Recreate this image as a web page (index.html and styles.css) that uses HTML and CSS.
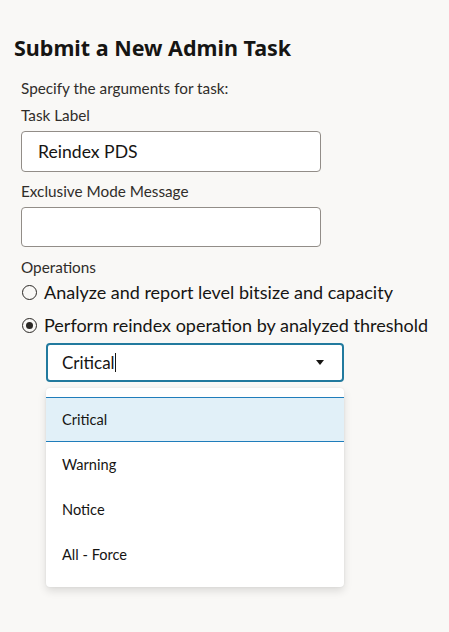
FILE: index.html
```html
<!DOCTYPE html>
<html lang="en">
<head>
<meta charset="utf-8">
<title>Submit a New Admin Task</title>
<link rel="stylesheet" href="styles.css">
</head>
<body>
<div class="page">
  <h1 class="title">Submit a New Admin Task</h1>
  <div class="form">
    <p class="intro">Specify the arguments for task:</p>
    <label class="label">Task Label</label>
    <div class="input">Reindex PDS</div>
    <label class="label label-gap">Exclusive Mode Message</label>
    <div class="input input-empty"></div>
    <div class="label label-gap2">Operations</div>
    <div class="radio-row">
      <span class="radio"></span>
      <span class="radio-text">Analyze and report level bitsize and capacity</span>
    </div>
    <div class="radio-row radio-row2">
      <span class="radio radio-on"><span class="dot"></span></span>
      <span class="radio-text">Perform reindex operation by analyzed threshold</span>
    </div>
    <div class="select-wrap">
      <div class="select">
        <span class="select-value">Critical<span class="cursor"></span></span>
        <span class="caret"></span>
      </div>
      <ul class="menu">
        <li class="item item-active">Critical</li>
        <li class="item">Warning</li>
        <li class="item">Notice</li>
        <li class="item">All - Force</li>
      </ul>
    </div>
  </div>
</div>
</body>
</html>
```
FILE: styles.css
```css
html, body {
  margin: 0;
  padding: 0;
  background: #f9f8f6;
}
body {
  font-family: "Lato", "Noto Sans", sans-serif;
  color: #161513;
  width: 449px;
  height: 632px;
  overflow: hidden;
}
.page {
  padding: 35px 14px 0 14px;
}
.title {
  margin: 0;
  font-family: "Noto Sans", "Lato", sans-serif;
  font-size: 21.5px;
  line-height: 26px;
  font-weight: 700;
  color: #161513;
  white-space: nowrap;
}
.form {
  padding-left: 7px;
}
.intro {
  margin: 17px 0 0 0;
  font-size: 15.3px;
  line-height: 20px;
  color: #302d2a;
}
.label {
  display: block;
  margin-top: 7px;
  font-size: 15.3px;
  line-height: 20px;
  color: #302d2a;
}
.label-gap { margin-top: 9px; }
.label-gap2 { margin-top: 10px; }
.input {
  box-sizing: border-box;
  margin-top: 6px;
  width: 300px;
  height: 41px;
  border: 1px solid #928d88;
  border-radius: 4px;
  background: #fff;
  padding: 0 16px;
  font-size: 17.6px;
  line-height: 39px;
  color: #161513;
}
.input-empty { height: 40px; }
.radio-row {
  display: flex;
  align-items: center;
  height: 24px;
  margin-top: 3px;
  gap: 7px;
  white-space: nowrap;
}
.radio-row2 { margin-top: 9px; }
.radio {
  box-sizing: border-box;
  width: 15px;
  height: 15px;
  border: 1.5px solid #2b2825;
  border-radius: 50%;
  display: flex;
  align-items: center;
  justify-content: center;
  margin-left: 1px;
}
.dot {
  width: 7px;
  height: 7px;
  border-radius: 50%;
  background: #2b2825;
}
.radio-text {
  font-size: 18px;
  line-height: 24px;
  color: #161513;
}
.select-wrap {
  position: relative;
  margin: 6px 0 0 25px;
  width: 298px;
}
.select {
  box-sizing: border-box;
  height: 39px;
  border: 2px solid #227a9e;
  border-radius: 4px;
  background: #fff;
  display: flex;
  align-items: center;
  justify-content: space-between;
  padding: 0 18px 0 14px;
}
.select-value {
  font-size: 17px;
  color: #161513;
  display: flex;
  align-items: center;
}
.cursor {
  display: inline-block;
  width: 1px;
  height: 19px;
  background: #161513;
  margin-left: 0;
}
.caret {
  width: 0;
  height: 0;
  border-left: 4.5px solid transparent;
  border-right: 4.5px solid transparent;
  border-top: 5px solid #161513;
}
.menu {
  position: absolute;
  top: 45px;
  left: 0;
  width: 298px;
  margin: 0;
  padding: 9px 0 10px 0;
  list-style: none;
  background: #fff;
  border-radius: 4px;
  box-shadow: 0 4px 8px rgba(0, 0, 0, 0.12), 0 0 2px rgba(0, 0, 0, 0.08);
}
.item {
  box-sizing: border-box;
  height: 45px;
  line-height: 45px;
  padding-left: 16px;
  font-size: 14.6px;
  color: #161513;
}
.item-active {
  background: #e1f0f8;
  border-top: 1px solid #1f7dbb;
  border-bottom: 1px solid #1f7dbb;
  line-height: 43px;
}
```
